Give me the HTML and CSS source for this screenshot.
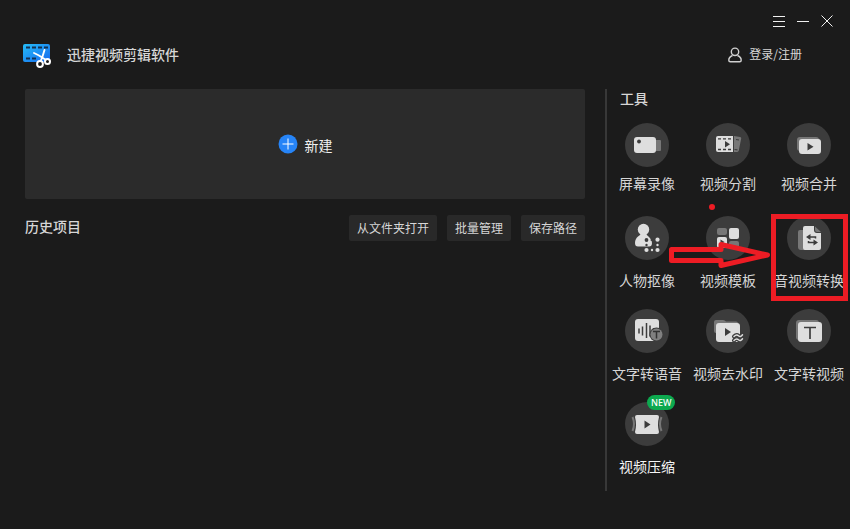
FILE: index.html
```html
<!DOCTYPE html>
<html lang="zh-CN">

<head>
    <meta charset="UTF-8">
    <meta name="viewport" content="width=device-width, initial-scale=1.0">
    <title>迅捷视频剪辑软件</title>
    <link rel="stylesheet" href="styles.css">
</head>

<body>
    <div class="window-bar">
        <button type="button" aria-label="菜单">
            <svg width="12" height="12" viewBox="0 0 12 12"><path d="M0 1.5h12M0 6.5h12M0 11.5h12" /></svg>
        </button>
        <button type="button" aria-label="最小化">
            <svg width="12" height="12" viewBox="0 0 12 12"><path d="M0 6.5h12" /></svg>
        </button>
        <button type="button" aria-label="关闭">
            <svg width="12" height="12" viewBox="0 0 12 12"><path d="M.5 .5l11 11M11.5 .5l-11 11" /></svg>
        </button>
    </div>

    <header class="header">
        <svg class="logo" width="28" height="26" viewBox="0 0 28 26">
            <defs>
                <linearGradient id="film" x1="0" y1="0" x2="1" y2="1">
                    <stop offset="0" stop-color="#25bdf8" />
                    <stop offset="1" stop-color="#1768ee" />
                </linearGradient>
            </defs>
            <rect x="0" y="2" width="27" height="18" rx="2" fill="url(#film)" />
            <path d="M3 5.500h4M9 5.500h4M15 5.500h4M21 5.500h4M3 16.500h4M9 16.500h4" stroke="#14304f" stroke-width="2" />
            <g fill="none" stroke="#fff">
                <path d="M11 11l5 2.500 7 4.500M21.500 8l-2 6.500-2 5" stroke-width="1.900" stroke-linecap="round" />
                <circle cx="17" cy="22" r="2.900" fill="#1b1b1b" stroke-width="2" />
                <circle cx="24.500" cy="19.500" r="2.500" fill="#1b1b1b" stroke-width="2" />
            </g>
        </svg>
        <h1>迅捷视频剪辑软件</h1>
        <a class="login" href="#login">
            <svg width="14" height="16" viewBox="0 0 14 16">
                <circle cx="7" cy="4.800" r="3.700" />
                <path d="M4.500 8.500C2.200 9.400.8 11 .8 13.200c0 1 .6 1.500 1.500 1.500h9.400c.9 0 1.500-.5 1.500-1.500 0-2.200-1.400-3.800-3.700-4.700" />
            </svg>
            <span>登录/注册</span>
        </a>
    </header>

    <main class="content">
        <section class="projects">
            <button class="create" type="button">
                <svg width="20" height="20" viewBox="0 0 20 20">
                    <circle cx="10" cy="10" r="9.500" fill="#2684f7" />
                    <path d="M4.500 10h11M10 4.500v11" stroke="#fff" />
                </svg>
                <span>新建</span>
            </button>
            <div class="history">
                <h2>历史项目</h2>
                <button type="button">从文件夹打开</button>
                <button type="button">批量管理</button>
                <button type="button">保存路径</button>
            </div>
        </section>

        <aside class="tools">
            <h2>工具</h2>
            <div class="tool-grid">
                <a class="tool first-row" href="#record">
                    <svg class="tool-icon" viewBox="0 0 44 44">
                        <rect x="28" y="17" width="8" height="11" rx="1" fill="#777" />
                        <rect x="9" y="14" width="22" height="16" rx="3" fill="#dedede" />
                        <circle cx="14" cy="18.500" r="1.900" fill="#3c3c3c" />
                    </svg>
                    <span>屏幕录像</span>
                </a>
                <a class="tool first-row" href="#split">
                    <svg class="tool-icon" viewBox="0 0 44 44">
                        <path d="M28 13l6 1q1.500.3 1.200 1.600l-2.400 12q-.3 1.400-1.600 1.400H28z" fill="#777" />
                        <path d="M30 16.500l3 .5M28.500 26.500l3 .3" stroke="#3c3c3c" stroke-width="1.200" />
                        <path d="M12 13h15v16H12q-2 0-2-2V15q0-2 2-2z" fill="#dedede" />
                        <path d="M12 15.800h15M12 26.500h15" stroke="#3c3c3c" stroke-width="1.300" stroke-dasharray="3 2" />
                        <path d="M19 18l5 3.300-5 3.300z" fill="#3c3c3c" />
                    </svg>
                    <span>视频分割</span>
                </a>
                <a class="tool first-row" href="#merge">
                    <svg class="tool-icon" viewBox="0 0 44 44">
                        <rect x="10" y="14" width="22" height="14" rx="3" fill="#777" />
                        <rect x="12" y="16" width="22" height="15" rx="3" fill="#dedede" />
                        <path d="M20.500 20l6 3.700-6 3.700z" fill="#3c3c3c" />
                    </svg>
                    <span>视频合并</span>
                </a>
                <a class="tool" href="#cutout">
                    <svg class="tool-icon" viewBox="0 0 44 44">
                        <circle cx="18.500" cy="13.500" r="5.700" fill="#dedede" />
                        <path d="M16 17h5q.5 2.500 3 4 3 2.500 3 6 0 3.500-3 3.500H13q-3 0-3-3.500 0-4 3-6.500 2.500-1.500 3-3.500z" fill="#dedede" />
                        <g fill="#3c3c3c"><circle cx="21.500" cy="24" r="1.900" /><circle cx="21.500" cy="29" r="1.200" /><circle cx="26.500" cy="24" r="1" /></g>
                        <g fill="#dedede">
                            <circle cx="32.500" cy="23.700" r="2.100" /><circle cx="32.500" cy="29" r="1.200" /><circle cx="32.500" cy="34" r="2.100" />
                            <circle cx="21.500" cy="34" r="2.100" /><circle cx="27" cy="34" r="1.200" />
                        </g>
                    </svg>
                    <span>人物抠像</span>
                </a>
                <a class="tool" href="#template">
                    <svg class="tool-icon" viewBox="0 0 44 44">
                        <rect x="11" y="12" width="10" height="7" rx="2" fill="#777" />
                        <rect x="23" y="12" width="10" height="11" rx="2" fill="#dedede" />
                        <rect x="11" y="21" width="10" height="11" rx="2" fill="#dedede" />
                        <rect x="23" y="25" width="10" height="7" rx="2" fill="#777" />
                        <path d="M14.500 23.500l4 2.500-4 2.500z" fill="#3c3c3c" />
                    </svg>
                    <span>视频模板</span>
                </a>
                <a class="tool" href="#convert">
                    <svg class="tool-icon" viewBox="0 0 44 44">
                        <path d="M13 14h6v20h-5q-3 0-3-3V16q0-2 2-2z" fill="#777" />
                        <path d="M18 10h9v4q0 3 3 3h4v15q0 2-2 2H18q-2 0-2-2V12q0-2 2-2z" fill="#dedede" />
                        <path d="M28 10.500l6 5.500h-4q-2 0-2-2z" fill="#777" />
                        <path d="M28.500 22.500v-1.500h-7M21.500 25v1.500h7" fill="none" stroke="#3c3c3c" stroke-width="1.500" />
                        <path d="M19 21l4.500-3v6zM31 26.500l-4.500-3v6z" fill="#3c3c3c" />
                    </svg>
                    <span>音视频转换</span>
                </a>
                <a class="tool" href="#text-to-speech">
                    <svg class="tool-icon" viewBox="0 0 44 44">
                        <rect x="10" y="10" width="24" height="22" rx="3" fill="#dedede" />
                        <path d="M14 19.500v5M17.500 17.500v9M21.500 14v15M25 16.500v11M28.500 19v3" stroke="#3c3c3c" stroke-width="1.500" />
                        <circle cx="31.500" cy="25.500" r="7" fill="#3c3c3c" />
                        <circle cx="31.500" cy="25.500" r="6" fill="#808080" />
                        <path d="M28 22.500h7M31.500 22.500v7" stroke="#333" stroke-width="1.500" />
                    </svg>
                    <span>文字转语音</span>
                </a>
                <a class="tool" href="#watermark">
                    <svg class="tool-icon" viewBox="0 0 44 44">
                        <path d="M10 11h7q2 0 3 1.500h10q2 0 2 2V24H10q-2 0-2-2v-9q0-2 2-2z" fill="#777" />
                        <rect x="10" y="14" width="24" height="19" rx="3" fill="#dedede" />
                        <path d="M19 19l6 4-6 4z" fill="#3c3c3c" />
                        <g fill="none" stroke-linecap="round">
                            <path d="M28 27.500q2.500-2.500 4.500-.7t4-1M28 31.500q2.500-2.500 4.500-.7t4-1" stroke="#3c3c3c" stroke-width="4" />
                            <path d="M28 27.500q2.500-2.500 4.500-.7t4-1M28 31.500q2.500-2.500 4.500-.7t4-1" stroke="#dedede" stroke-width="1.500" />
                        </g>
                    </svg>
                    <span>视频去水印</span>
                </a>
                <a class="tool" href="#text-to-video">
                    <svg class="tool-icon" viewBox="0 0 44 44">
                        <rect x="9" y="11" width="23" height="20" rx="3" fill="#777" />
                        <rect x="11" y="13" width="24" height="20" rx="3" fill="#dedede" />
                        <path d="M17 18.500h12M23 18.500V30" stroke="#3c3c3c" stroke-width="1.700" />
                    </svg>
                    <span>文字转视频</span>
                </a>
                <a class="tool bright" href="#compress">
                    <svg class="tool-icon" viewBox="0 0 44 44">
                        <path d="M7.500 15q3 7 0 14M36.500 15q-3 7 0 14" fill="none" stroke="#777" stroke-width="2" />
                        <path d="M12 13h20q2 0 2 2-2 7.500 0 15 0 2-2 2H12q-2 0-2-2 2-7.500 0-15 0-2 2-2z" fill="#dedede" />
                        <path d="M19.500 18.500l6 4-6 4z" fill="#3c3c3c" />
                    </svg>
                    <b class="badge">NEW</b>
                    <span>视频压缩</span>
                </a>
            </div>

            <!-- red pointer to the converter -->
            <svg class="marker" width="245" height="402" viewBox="0 0 245 402">
                <circle cx="107" cy="118" r="3" />
                <path d="M66.500 160.500H116V155.500L162.500 166 116 176.500V171.500H66.500z" />
                <rect x="168.500" y="127.500" width="72" height="82" />
            </svg>
        </aside>
    </main>
</body>

</html>
```
FILE: styles.css
```css
* {
    box-sizing: border-box;
}

body {
    margin: 0;
    min-height: 100vh;
    background-color: #1b1b1b;
    color: #d6d6d6;
    font-family: "Noto Sans CJK SC", sans-serif;
    font-size: 14px;
    line-height: 20px;
}

h1,
h2 {
    margin: 0;
    padding-bottom: 2px;
    font-size: 14px;
    font-weight: 500;
    line-height: 18px;
}

a {
    color: inherit;
    text-decoration: none;
}

button {
    border: none;
    color: inherit;
    font-family: inherit;
    cursor: pointer;
}

.window-bar {
    display: flex;
    justify-content: flex-end;
    gap: 12px;
    padding: 15px 17px 0 0;
}

.window-bar button {
    display: flex;
    padding: 0;
    background: none;
}

.window-bar svg {
    fill: none;
    stroke: #f0f0f0;
}

.header {
    display: flex;
    align-items: center;
    height: 56px;
    padding: 0 48px 0 23px;
}

.header h1 {
    margin-left: 16px;
}

.login {
    display: flex;
    align-items: center;
    gap: 7px;
    margin-left: auto;
    font-size: 12px;
}

.login span {
    padding-bottom: 2px;
}

.login svg {
    fill: none;
    stroke: #d0d0d0;
    stroke-width: 1.4;
}

.content {
    display: flex;
    gap: 20px;
    padding: 6px 0 38px 25px;
}

.projects {
    flex: 1;
}

.create {
    display: flex;
    justify-content: center;
    align-items: center;
    gap: 7px;
    width: 100%;
    height: 110px;
    border-radius: 2px;
    background-color: #2b2b2b;
    color: #f0f0f0;
    font-size: 14px;
}

.create span {
    padding-top: 2px;
}

.history {
    display: flex;
    align-items: center;
    gap: 10px;
    margin-top: 16px;
}

.history h2 {
    margin-right: auto;
    padding-bottom: 4px;
}

.history button {
    height: 26px;
    padding: 0 8px 2px;
    border-radius: 2px;
    background-color: #292929;
    font-size: 12px;
}

.tools {
    position: relative;
    width: 245px;
    border-left: 2px solid #383838;
}

.tools h2 {
    padding-left: 13px;
}

.tool-grid {
    display: grid;
    grid-template-columns: repeat(3, 1fr);
    grid-auto-rows: 89px;
    gap: 4px 1px;
    margin-top: 14px;
    margin-right: 1px;
}

.tool {
    position: relative;
    display: flex;
    flex-direction: column;
    align-items: center;
    gap: 10px;
    white-space: nowrap;
}

.tool.first-row {
    gap: 6px;
}

.tool.bright {
    color: #f5f5f5;
}

.tool-icon {
    width: 44px;
    height: 44px;
    border-radius: 50%;
    background-color: #3c3c3c;
}

.badge {
    position: absolute;
    top: -7px;
    left: 40px;
    padding: 0 4px;
    border-radius: 8px;
    background-color: #0da94f;
    color: #fff;
    font-family: "Noto Sans", sans-serif;
    font-size: 9px;
    font-weight: 500;
    line-height: 15px;
}

.marker {
    position: absolute;
    top: 0;
    left: -2px;
    fill: none;
    stroke: #ed1c24;
    stroke-width: 5;
    pointer-events: none;
}

.marker path {
    stroke-linejoin: round;
}

.marker circle {
    fill: #ed1c24;
    stroke: none;
}
```
